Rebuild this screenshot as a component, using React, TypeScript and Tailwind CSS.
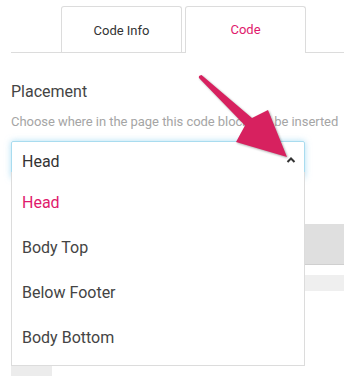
import React from "react";

export default function App() {
  const items = ["Head", "Body Top", "Below Footer", "Body Bottom"];
  return (
    <div className="relative w-[344px] h-[376px] overflow-hidden bg-white font-['Roboto',sans-serif]">
      <div className="pl-[11px]">
        <div className="flex pt-[6px] border-b border-[#dcdcdc]">
          <div className="ml-[50px] w-[121px] h-[46px] border border-b-0 border-[#dcdcdc] rounded-t-[3px] flex items-center justify-center pt-[2px] text-[13px] text-[#333]">
            Code Info
          </div>
          <div className="ml-[3px] w-[121px] h-[47px] -mb-px bg-white border border-b-0 border-[#dcdcdc] rounded-t-[3px] flex items-center justify-center text-[13px] text-[#e0196c]">
            Code
          </div>
        </div>
        <div className="mt-[29px] text-[16px] leading-[19px] text-[#444]">Placement</div>
        <div className="mt-[13px] text-[13px] leading-[16px] text-[#a5a5a5] whitespace-nowrap tracking-[-0.05px]">
          Choose where in the page this code block will be inserted
        </div>
        <div className="relative mt-[11px] w-[294px]">
          <div className="h-[37px] border border-[#a9dcef] shadow-[0_0_6px_rgba(110,195,235,0.55)] rounded-[2px] flex items-center justify-between pl-[10px] pr-[8px] pt-[4px] text-[16px] text-[#333]">
            <span>Head</span>
            <svg width="10" height="8" viewBox="0 0 10 8" className="-mt-[4px]">
              <polyline points="1.5,6 5,2.5 8.5,6" fill="none" stroke="#333" strokeWidth="2" />
            </svg>
          </div>
          <div className="absolute z-10 left-0 top-[31px] w-[294px] bg-white border-x border-b border-[#dcdcdc] pt-[8px] pb-[5px]">
            {items.map((it, i) => (
              <div
                key={it}
                className={`h-[45px] flex items-center pl-[10px] text-[16px] ${i === 0 ? "text-[#e0196c]" : "text-[#444]"}`}
              >
                {it}
              </div>
            ))}
          </div>
        </div>
        <div className="mt-[46px] h-[41px] bg-[#dfdfdf] border-b border-[#cfcfcf]" />
        <div className="mt-[10px] h-[16px] bg-[#efefef]" />
        <div className="mt-[73px] w-[41px] h-[12px] bg-[#ececec]" />
      </div>
      <svg
        className="absolute left-0 top-0 z-20 pointer-events-none drop-shadow-[1px_1px_1px_rgba(0,0,0,0.35)]"
        width="344"
        height="376"
        viewBox="0 0 344 376"
      >
        <path
          d="M201.5 75 L252 118 L268 110 L287 157 L236 142 L245 125.5 L199 78 Q198 75.5 201.5 75 Z"
          fill="#d7215f"
        />
      </svg>
    </div>
  );
}
